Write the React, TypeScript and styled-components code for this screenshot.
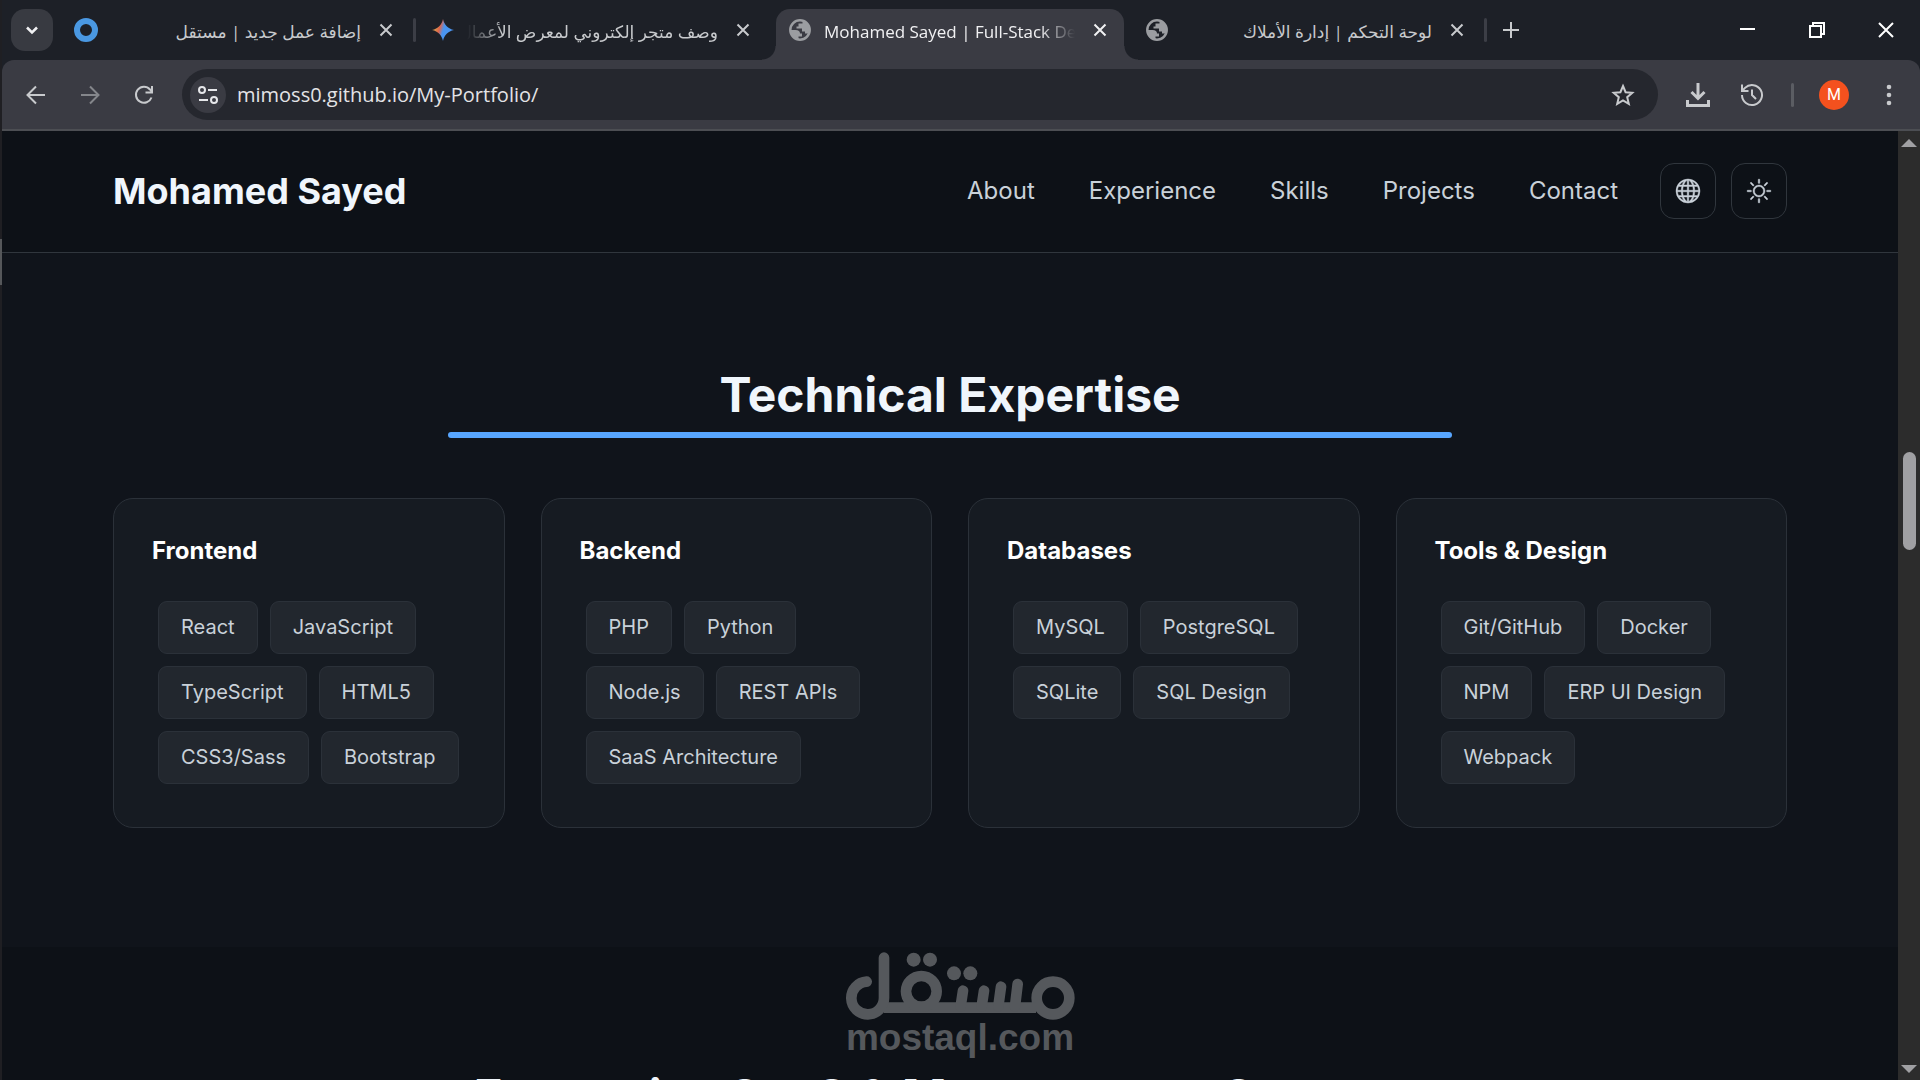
import React from "react";
import styled, { createGlobalStyle, css } from "styled-components";
import { BsGlobe, BsSun } from "react-icons/bs";

const color = {
  strip: "#1d2027",
  toolbar: "#3a3b43",
  omnibox: "#25272e",
  chromeText: "#e3e3e6",
  chromeIcon: "#c8cacd",
  page: "#0d1117",
  section: "#10141b",
  card: "#161b22",
  chip: "#22272e",
  line: "#2b3139",
  text: "#c9d1d9",
  heading: "#f0f6fc",
  accent: "#58a6ff",
};

const uiFont = `"Open Sans", "Noto Sans", "DejaVu Sans", sans-serif`;
const pageFont = `Inter, "Liberation Sans", sans-serif`;

const GlobalStyle = createGlobalStyle`
  *, *::before, *::after { box-sizing: border-box; }
  body { margin: 0; background: ${color.page}; overflow: hidden; }
  h1, h2, h3, p, ul { margin: 0; padding: 0; }
  ul { list-style: none; }
  a { color: inherit; text-decoration: none; }
  button { margin: 0; padding: 0; border: 0; background: none; color: inherit; font: inherit; cursor: pointer; }
`;

const Screen = styled.div`
  position: relative;
  display: flex;
  height: 100vh;
  overflow: hidden;
`;

const DesktopEdge = styled.div`
  flex: none;
  display: grid;
  grid-template-rows: 239px 46px 1fr;
  width: 2px;
  background: #1f1f23;
  &::before { content: ""; grid-row: 2; background: #55575a; }
`;

const Browser = styled.div`
  flex: 1;
  min-width: 0;
  display: flex;
  flex-direction: column;
  background: ${color.strip};
`;

/* Tab strip */
const TabStrip = styled.div`
  flex: none;
  display: flex;
  height: 60px;
  padding: 9px 0 0 9px;
  color: ${color.chromeIcon};
  font-family: ${uiFont};
`;

const TabSearch = styled.button`
  display: grid;
  place-items: center;
  width: 42px;
  height: 42px;
  margin-right: 9px;
  border-radius: 14px;
  background: #383a41;
  color: #f1f1f3;
`;

const foot = css`
  content: "";
  position: absolute;
  bottom: 0;
  width: 14px;
  height: 14px;
`;

const Tab = styled.div<{ $active?: boolean }>`
  position: relative;
  flex: 0 1 348px;
  min-width: 0;
  display: flex;
  align-items: flex-start;
  height: 51px;
  padding: 10px 17px 0 13px;
  ${({ $active }) =>
    $active &&
    css`
      border-radius: 14px 14px 0 0;
      background: ${color.toolbar};
      color: #f1f1f3;
      &::before {
        ${foot}
        right: 100%;
        background: radial-gradient(circle at 0 0, transparent 13px, ${color.toolbar} 14px);
      }
      &::after {
        ${foot}
        left: 100%;
        background: radial-gradient(circle at 100% 0, transparent 13px, ${color.toolbar} 14px);
      }
    `}
`;

const Favicon = styled.span`
  flex: none;
  display: flex;
  align-items: center;
  justify-content: center;
  width: 22px;
  height: 22px;
  color: #9b9da1;
  svg { flex: none; }
`;

const TabTitle = styled.span<{ $rtl?: boolean; $fade?: boolean }>`
  flex: 1;
  min-width: 0;
  margin: 0 18px 0 13px;
  overflow: hidden;
  white-space: nowrap;
  font-size: 17px;
  line-height: 25px;
  direction: ${({ $rtl }) => ($rtl ? "rtl" : "ltr")};
  ${({ $fade, $rtl }) =>
    $fade &&
    css`
      mask-image: linear-gradient(to ${$rtl ? "left" : "right"}, #000 calc(100% - 36px), transparent);
    `}
`;

const TabClose = styled.button`
  display: grid;
  place-items: center;
  width: 14px;
  height: 22px;
`;

const TabGap = styled.span<{ $line?: boolean }>`
  flex: none;
  width: 9px;
  height: 42px;
  display: grid;
  place-items: center;
  &::before {
    content: "";
    width: 3px;
    height: 24px;
    border-radius: 2px;
    background: ${({ $line }) => ($line ? "#3c3e46" : "transparent")};
  }
`;

const StripButton = styled.button`
  display: grid;
  place-items: center;
  width: 42px;
  height: 42px;
`;

const WindowButtons = styled.div`
  display: flex;
  margin-left: auto;
  color: #fff;
`;

const WindowButton = styled.button`
  display: grid;
  place-items: center;
  width: 69px;
  height: 42px;
`;

/* Toolbar */
const Toolbar = styled.div`
  flex: none;
  display: flex;
  align-items: center;
  height: 71px;
  padding: 0 4px 0 7px;
  border-bottom: 2px solid #4c4e53;
  border-radius: 12px 12px 0 0;
  background: ${color.toolbar};
  color: ${color.chromeIcon};
`;

const NavButton = styled.button`
  display: grid;
  place-items: center;
  width: 54px;
  height: 54px;
  &:disabled { color: #84868b; }
`;

const Omnibox = styled.form`
  flex: 1;
  display: flex;
  align-items: center;
  height: 51px;
  margin: 0 13px 0 11px;
  padding: 0 7px 0 8px;
  border-radius: 26px;
  background: ${color.omnibox};
`;

const SiteInfo = styled.button`
  display: grid;
  place-items: center;
  width: 36px;
  height: 36px;
  border-radius: 50%;
  background: ${color.toolbar};
  color: #e6e7ea;
`;

const Address = styled.input`
  flex: 1;
  min-width: 0;
  margin: 0 11px;
  padding: 0;
  border: 0;
  outline: 0;
  background: none;
  color: ${color.chromeText};
  font: 20px/28px ${uiFont};
`;

const OmniboxAction = styled.button`
  display: grid;
  place-items: center;
  width: 56px;
  height: 42px;
`;

const ToolbarRule = styled.span`
  width: 3px;
  height: 24px;
  margin: 0 12px;
  border-radius: 2px;
  background: #5b5d63;
`;

const Avatar = styled.button`
  width: 30px;
  height: 30px;
  margin: 0 13px;
  border-radius: 50%;
  background: #f4511e;
  color: #fff;
  font: 16px/30px Roboto, sans-serif;
`;

/* Viewport */
const Viewport = styled.div`
  flex: 1;
  min-height: 0;
  display: flex;
`;

const Page = styled.div`
  flex: 1;
  min-width: 0;
  overflow: hidden;
  background: ${color.page};
  color: ${color.text};
  font-family: ${pageFont};
`;

const Scrollbar = styled.div`
  flex: none;
  display: grid;
  grid-template-rows: 321px 98px 1fr;
  justify-items: center;
  width: 22px;
  padding-bottom: 7px;
  background: #2c2c2c;
  color: #a0a0a3;
`;

const ScrollArrow = styled.svg<{ $down?: boolean }>`
  align-self: ${({ $down }) => ($down ? "end" : "start")};
  margin-top: 8px;
  fill: currentColor;
`;

const ScrollThumb = styled.span`
  width: 13px;
  border-radius: 7px;
  background: #a0a0a3;
`;

const SiteHeader = styled.header`
  display: flex;
  align-items: center;
  height: 122px;
  padding: 0 111px 2px;
  border-bottom: 1px solid #30363d;
`;

const Brand = styled.a`
  margin-right: auto;
  color: ${color.heading};
  font-size: 36px;
  font-weight: 700;
  line-height: 48px;
`;

const SiteNav = styled.nav`
  display: flex;
  gap: 54px;
  margin-right: 42px;
  font-size: 24px;
  line-height: 36px;
`;

const HeaderActions = styled.div`
  display: flex;
  gap: 15px;
`;

const IconButton = styled.button`
  display: grid;
  place-items: center;
  width: 56px;
  height: 56px;
  border: 1px solid #30363d;
  border-radius: 14px;
  font-size: 24px;
  svg { stroke: currentColor; stroke-width: 0.3px; overflow: visible; }
`;

const Section = styled.section<{ $raised?: boolean }>`
  display: flex;
  flex-direction: column;
  padding: ${({ $raised }) => ($raised ? "108px 111px 119px" : "116px 111px")};
  background: ${({ $raised }) => ($raised ? color.section : color.page)};
`;

const SectionTitle = styled.h2`
  margin-bottom: 3px;
  color: ${color.heading};
  font-size: 48px;
  font-weight: 700;
  line-height: 68px;
  text-align: center;
  white-space: nowrap;
`;

const TitleBar = styled.span`
  align-self: center;
  width: 60%;
  height: 6px;
  margin-bottom: 60px;
  border-radius: 3px;
  background: ${color.accent};
`;

const CardGrid = styled.div`
  display: grid;
  grid-template-columns: repeat(4, minmax(0, 1fr));
  gap: 36px;
`;

const Card = styled.article`
  padding: 34px 38px 37px;
  border: 1px solid ${color.line};
  border-radius: 20px;
  background: ${color.card};
`;

const CardTitle = styled.h3`
  margin-bottom: 26px;
  color: #fff;
  font-size: 24px;
  font-weight: 700;
  line-height: 36px;
`;

const Chips = styled.ul`
  display: flex;
  flex-wrap: wrap;
  gap: 12px;
  padding: 6px;
`;

const Chip = styled.li`
  padding: 11px 22px;
  border: 1px solid ${color.line};
  border-radius: 9px;
  background: ${color.chip};
  font-size: 20px;
  line-height: 29px;
`;

const Watermark = styled.div`
  position: absolute;
  bottom: 24px;
  left: 50%;
  display: flex;
  flex-direction: column;
  align-items: center;
  transform: translateX(-50%);
  color: #55585c;
  font: 700 37px/36px "Liberation Sans", Arial, sans-serif;
  pointer-events: none;
`;

const skills = [
  { title: "Frontend", items: ["React", "JavaScript", "TypeScript", "HTML5", "CSS3/Sass", "Bootstrap"] },
  { title: "Backend", items: ["PHP", "Python", "Node.js", "REST APIs", "SaaS Architecture"] },
  { title: "Databases", items: ["MySQL", "PostgreSQL", "SQLite", "SQL Design"] },
  { title: "Tools & Design", items: ["Git/GitHub", "Docker", "NPM", "ERP UI Design", "Webpack"] },
];

const links = ["About", "Experience", "Skills", "Projects", "Contact"];

const Stroke = ({ size, width = 2, box = 24, children }: { size: number; width?: number; box?: number; children: React.ReactNode }) => (
  <svg width={size} height={size} viewBox={`0 0 ${box} ${box}`} fill="none" stroke="currentColor" strokeWidth={width} aria-hidden="true">
    {children}
  </svg>
);

const RingIcon = () => (
  <svg width="24" height="24" viewBox="0 0 24 24" aria-hidden="true">
    <circle cx="12" cy="12" r="9" fill="none" stroke="#4a98e2" strokeWidth="6" />
  </svg>
);

const EarthIcon = () => (
  <svg width="22" height="22" viewBox="0 0 22 22" fill="currentColor" aria-hidden="true">
    <circle cx="11" cy="11" r="9.700" fill="none" stroke="currentColor" strokeWidth="2.500" />
    <path d="M13.500 1.500V4.500H9.500V7.500H7.500V9.500H13V12.500H16V14.500H19.500L21 11L19 5Z" />
    <path d="M1.500 11H6.500C9.500 11 11 12.500 11 14.500H13V17.500H9.500V20.500L4 18Z" />
  </svg>
);

const SparkIcon = () => (
  <svg width="22" height="22" viewBox="0 0 22 22" aria-hidden="true">
    <defs>
      <linearGradient id="spark" x1="0" y1="0.1" x2="1" y2="0.4">
        <stop offset="0.2" stopColor="#d99a4e" />
        <stop offset="0.4" stopColor="#e0654a" />
        <stop offset="0.58" stopColor="#4a94f0" />
        <stop offset="1" stopColor="#4a94f0" />
      </linearGradient>
    </defs>
    <path d="M11 0C12.300 6 16 9.700 22 11C16 12.300 12.300 16 11 22C9.700 16 6 12.300 0 11C6 9.700 9.700 6 11 0Z" fill="url(#spark)" />
  </svg>
);

type TabInfo = { title: string; icon: React.ReactNode; rtl?: boolean; fade?: boolean; active?: boolean; line?: boolean };

const tabs: TabInfo[] = [
  { title: "إضافة عمل جديد | مستقل", icon: <RingIcon />, rtl: true, line: true },
  { title: "وصف متجر إلكتروني لمعرض الأعمال", icon: <SparkIcon />, rtl: true, fade: true },
  { title: "Mohamed Sayed | Full-Stack Developer", icon: <EarthIcon />, fade: true, active: true },
  { title: "لوحة التحكم | إدارة الأملاك", icon: <EarthIcon />, rtl: true, line: true },
];

const MostaqlMark = () => (
  <svg width="230" height="68" viewBox="315 155 690 204" fill="none" stroke="currentColor" strokeWidth="32" strokeLinecap="round" role="img" aria-label="مستقل">
    <circle cx="939" cy="293" r="49" />
    <path d="M888 322H432" strokeLinecap="butt" />
    <path d="M380 244A49 49 0 1 0 432 293V172" />
    <circle cx="544" cy="273" r="46" />
    <path d="M669 271L662 318M732 271L725 318M783 259L775 318M833 251L825 318" />
    <g fill="currentColor" stroke="none">
      <circle cx="521" cy="178" r="21" />
      <circle cx="570" cy="178" r="21" />
      <circle cx="642" cy="219" r="21" />
      <circle cx="691" cy="219" r="21" />
    </g>
  </svg>
);

export default function App() {
  return (
    <Screen>
      <GlobalStyle />
      <DesktopEdge />
      <Browser>
        <TabStrip>
          <TabSearch aria-label="Search tabs">
            <Stroke size={20} width={3}><path d="M6 9l6 6 6-6" /></Stroke>
          </TabSearch>
          {tabs.map((tab) => (
            <React.Fragment key={tab.title}>
              <Tab $active={tab.active}>
                <Favicon>{tab.icon}</Favicon>
                <TabTitle $rtl={tab.rtl} $fade={tab.fade}>{tab.title}</TabTitle>
                <TabClose aria-label="Close tab">
                  <Stroke size={14} width={2} box={14}><path d="M1.500 1.500l11 11M12.500 1.500l-11 11" /></Stroke>
                </TabClose>
              </Tab>
              <TabGap $line={tab.line} />
            </React.Fragment>
          ))}
          <StripButton aria-label="New tab">
            <Stroke size={16} width={2} box={16}><path d="M8 0v16M0 8h16" /></Stroke>
          </StripButton>
          <WindowButtons>
            <WindowButton aria-label="Minimize">
              <Stroke size={16} width={2} box={16}><path d="M0 7h15" /></Stroke>
            </WindowButton>
            <WindowButton aria-label="Restore">
              <Stroke size={16} width={2} box={16}><path d="M1 4h11v11H1zM4 4V1h11v11h-3" /></Stroke>
            </WindowButton>
            <WindowButton aria-label="Close">
              <Stroke size={16} width={2} box={16}><path d="M1 1l14 14M15 1L1 15" /></Stroke>
            </WindowButton>
          </WindowButtons>
        </TabStrip>

        <Toolbar>
          <NavButton aria-label="Back">
            <Stroke size={20} box={20}><path d="M19 10H2M10 1.500L1.500 10l8.500 8.500" /></Stroke>
          </NavButton>
          <NavButton aria-label="Forward" disabled>
            <Stroke size={20} box={20}><path d="M1 10h17M10 1.500l8.500 8.500L10 18.500" /></Stroke>
          </NavButton>
          <NavButton aria-label="Reload">
            <Stroke size={20} box={20}><path d="M17.500 12.500A8 8 0 1 1 16 4.500L18 7M18 1v6.500h-6.500" /></Stroke>
          </NavButton>
          <Omnibox onSubmit={(e) => e.preventDefault()}>
            <SiteInfo type="button" aria-label="View site information">
              <Stroke size={20} box={20}>
                <circle cx="4" cy="5" r="3" />
                <path d="M10 5h9M1 15h9" />
                <circle cx="16" cy="15" r="3" />
              </Stroke>
            </SiteInfo>
            <Address aria-label="Address" defaultValue="mimoss0.github.io/My-Portfolio/" />
            <OmniboxAction type="button" aria-label="Bookmark this page">
              <Stroke size={24}><path d="M12 3l2.600 6.200 6.700.600-5.100 4.400 1.600 6.600L12 17.300l-5.800 3.500 1.600-6.600L2.700 9.800l6.700-.600z" /></Stroke>
            </OmniboxAction>
          </Omnibox>
          <NavButton aria-label="Downloads">
            <Stroke size={24} width={3}><path d="M12 0v15M5.500 9l6.500 6.500L18.500 9M1.500 17v5.500h21V17" /></Stroke>
          </NavButton>
          <NavButton aria-label="History">
            <Stroke size={24}><path d="M2 12a10 10 0 1 0 3-7.100L2.500 7.500M2 1.500V8h6.500M12 6.500V12l4 4" /></Stroke>
          </NavButton>
          <ToolbarRule />
          <Avatar aria-label="Profile M">M</Avatar>
          <NavButton aria-label="Menu">
            <svg width="6" height="22" viewBox="0 0 6 22" fill="currentColor" aria-hidden="true">
              <circle cx="3" cy="3" r="2.300" />
              <circle cx="3" cy="11" r="2.300" />
              <circle cx="3" cy="19" r="2.300" />
            </svg>
          </NavButton>
        </Toolbar>

        <Viewport>
          <Page>
            <SiteHeader>
              <Brand href="#top">Mohamed Sayed</Brand>
              <SiteNav>
                {links.map((link) => (
                  <a key={link} href={`#${link.toLowerCase()}`}>{link}</a>
                ))}
              </SiteNav>
              <HeaderActions>
                <IconButton aria-label="Change language"><BsGlobe /></IconButton>
                <IconButton aria-label="Toggle theme"><BsSun /></IconButton>
              </HeaderActions>
            </SiteHeader>
            <Section $raised id="skills">
              <SectionTitle>Technical Expertise</SectionTitle>
              <TitleBar />
              <CardGrid>
                {skills.map((group) => (
                  <Card key={group.title}>
                    <CardTitle>{group.title}</CardTitle>
                    <Chips>
                      {group.items.map((item) => (
                        <Chip key={item}>{item}</Chip>
                      ))}
                    </Chips>
                  </Card>
                ))}
              </CardGrid>
            </Section>
            <Section id="projects">
              <SectionTitle>Enterprise SaaS &amp; Management Systems</SectionTitle>
            </Section>
          </Page>
          <Scrollbar aria-hidden="true">
            <ScrollArrow width="16" height="8" viewBox="0 0 16 8"><path d="M8 0l8 8H0z" /></ScrollArrow>
            <ScrollThumb />
            <ScrollArrow $down width="16" height="8" viewBox="0 0 16 8"><path d="M8 8L0 0h16z" /></ScrollArrow>
          </Scrollbar>
        </Viewport>
      </Browser>
      <Watermark>
        <MostaqlMark />
        mostaql.com
      </Watermark>
    </Screen>
  );
}
